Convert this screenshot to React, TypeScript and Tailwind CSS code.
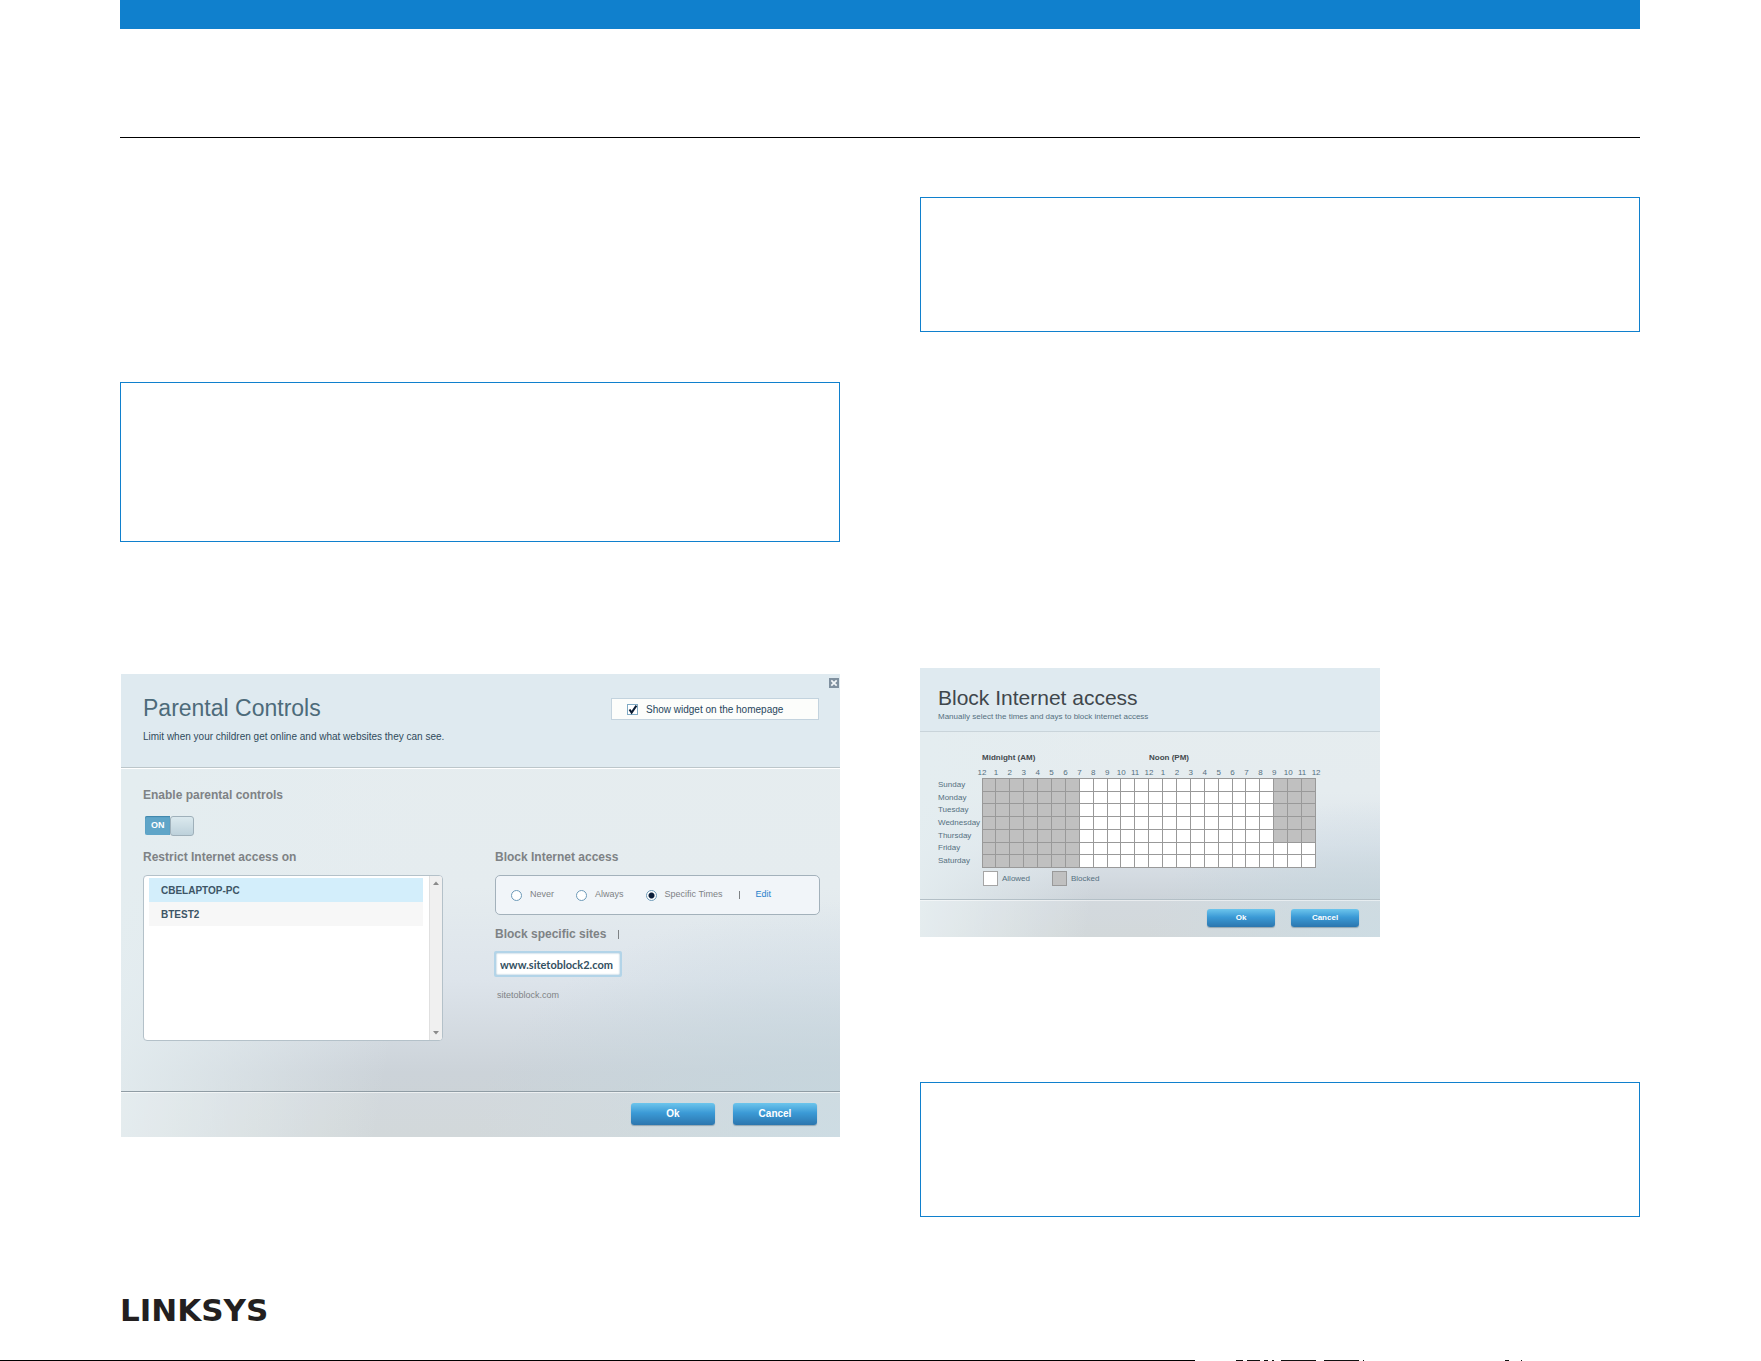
// src/App.tsx
import React, { useState } from 'react';
import clsx from 'clsx';

const devices = ['CBELAPTOP-PC', 'BTEST2'];
const accessModes = ['Never', 'Always', 'Specific Times'];

const days = ['Sunday', 'Monday', 'Tuesday', 'Wednesday', 'Thursday', 'Friday', 'Saturday'];
const hours = Array.from({ length: 24 }, (_, h) => h);
const hourLabels = [...hours, 24].map((h) => (h % 12 === 0 ? 12 : h % 12));

// Every night until 7 AM, and from 9 PM on school nights
const isBlocked = (day: number, hour: number) => hour < 7 || (day < 5 && hour >= 21);

const panelClass =
  'flex flex-col bg-[radial-gradient(ellipse_at_100%_100%,#c5d6de_0%,transparent_36%),linear-gradient(100deg,#e4edf0_4%,transparent_42%),linear-gradient(180deg,#e6edef_0%,#e5ecef_46%,#dde4eb_66%,#ccd3d9_86%,#cbd2d4_100%)]';

const NoteBox: React.FC<{ className?: string }> = ({ className }) => (
  <div className={clsx('border border-[#1080cd]', className)} />
);

const ActionButton: React.FC<{ label: string; className?: string }> = ({ label, className }) => (
  <button
    type="button"
    className={clsx(
      'rounded-[3px] bg-linear-to-b from-[#6cc5ec] via-[#3b9ad6] via-45% to-[#2c76ae] pb-px font-bold text-white shadow-[0_1px_1px_rgba(60,90,110,0.4)] hover:brightness-105',
      className
    )}
  >
    {label}
  </button>
);

const ParentalControls: React.FC = () => {
  const [enabled, setEnabled] = useState(true);
  const [selected, setSelected] = useState('CBELAPTOP-PC');
  const [mode, setMode] = useState('Specific Times');

  return (
    <section className={clsx('ml-px', panelClass)}>
      <header className="relative flex h-[94px] items-start justify-between border-b border-[#bcc6ca] bg-[#dfeaf0] pr-[21px] pl-[22px]">
        <div className="pt-5">
          <h2 className="text-[23px] leading-7 text-[#4d6b7a]">Parental Controls</h2>
          <p className="mt-[9px] text-[10px] leading-3 text-[#2f4a5c]">
            Limit when your children get online and what websites they can see.
          </p>
        </div>
        <label className="mt-6 flex h-[22px] w-52 items-center gap-2 border border-[#c3d3de] bg-[#fcfdfb] pl-[15px] text-[10px] text-[#27455c]">
          <span className="relative h-[11px] w-[11px]">
            <input
              type="checkbox"
              defaultChecked
              className="peer block h-[11px] w-[11px] appearance-none border border-[#7faac4] bg-white"
            />
            <svg
              viewBox="0 0 11 11"
              className="pointer-events-none absolute inset-0 hidden h-[11px] w-[11px] peer-checked:block"
            >
              <path d="M2.5 5.5 L4.6 8.6 L9.4 1.6" fill="none" stroke="#0b1d33" strokeWidth="2" />
            </svg>
          </span>
          Show widget on the homepage
        </label>
        <button
          type="button"
          aria-label="Close"
          className="absolute top-1 right-px h-[10px] w-[10px] bg-[#7f909f]"
        >
          <svg viewBox="0 0 10 10" className="h-[10px] w-[10px]">
            <path d="M2.3 2.3 L7.7 7.7 M7.7 2.3 L2.3 7.7" stroke="#f4f8fa" strokeWidth="1.7" />
          </svg>
        </button>
      </header>

      <div className="border-t border-white px-[22px] pt-[19px] pb-[50px] text-[#7e8285]">
        <h3 className="text-[12px] leading-[14px] font-bold">Enable parental controls</h3>
        <label className="mt-[14px] ml-0.5 flex h-5 w-[49px] cursor-pointer">
          <input
            type="checkbox"
            role="switch"
            aria-label="Enable parental controls"
            checked={enabled}
            onChange={() => setEnabled(!enabled)}
            className="sr-only"
          />
          {enabled && (
            <span className="flex h-[19px] flex-1 items-center rounded-l-[2px] bg-[#5fa5c8] pl-[6px] text-[9px] font-bold text-white shadow-[inset_0_1px_1px_#3f86aa]">
              ON
            </span>
          )}
          <span className="h-5 w-6 rounded-[3px] border border-[#9fb0ba] bg-linear-to-b from-[#dbe9ee] to-[#bdd1db]" />
          {!enabled && <span className="h-[19px] flex-1 rounded-r-[2px] bg-[#b5c0c6]" />}
        </label>

        <div className="mt-[14px] grid grid-cols-[300px_1fr] gap-[52px]">
          <div>
            <h3 className="text-[12px] leading-[14px] font-bold">Restrict Internet access on</h3>
            <div className="mt-[11px] flex h-[166px] overflow-hidden rounded-[4px] border border-[#b4c1c9] bg-white">
              <ul className="flex-1 px-[5px] pt-0.5">
                {devices.map((device) => (
                  <li key={device}>
                    <button
                      type="button"
                      onClick={() => setSelected(device)}
                      className={clsx(
                        'block h-6 w-[274px] pl-3 text-left text-[10px] font-bold text-[#3d5566]',
                        selected === device ? 'bg-[#d3eefb]' : 'bg-[#f7f7f7]'
                      )}
                    >
                      {device}
                    </button>
                  </li>
                ))}
              </ul>
              <div className="flex w-[13px] flex-col items-center justify-between border-l border-[#e0e0e0] bg-[#f0f0f0] py-[5px]">
                <svg viewBox="0 0 6 4" className="h-1 w-1.5">
                  <path d="M0 4 L3 0.5 L6 4 Z" fill="#8b8b8b" />
                </svg>
                <svg viewBox="0 0 6 4" className="h-1 w-1.5">
                  <path d="M0 0 L3 3.5 L6 0 Z" fill="#8b8b8b" />
                </svg>
              </div>
            </div>
          </div>

          <div>
            <h3 className="text-[12px] leading-[14px] font-bold">Block Internet access</h3>
            <div className="mt-[11px] mr-[-2px] flex h-10 items-center rounded-[5px] border border-[#a3b1bb] bg-[#f1f5f9] pl-[15px] text-[9px]">
              <div className="flex gap-[22px]">
                {accessModes.map((item) => (
                  <label key={item} className="flex items-center gap-2">
                    <input
                      type="radio"
                      name="access"
                      checked={mode === item}
                      onChange={() => setMode(item)}
                      className="h-[11px] w-[11px] appearance-none rounded-full border border-[#6d9ab8] bg-white checked:bg-[radial-gradient(circle,#0b1d3a_2.5px,white_3.5px)]"
                    />
                    {item}
                  </label>
                ))}
              </div>
              <span className="mx-4 h-2 w-px bg-[#7e8285]" />
              <a href="#schedule" className="text-[#1f82cc]">
                Edit
              </a>
            </div>

            <div className="mt-3 flex items-center gap-3 leading-[14px]">
              <label htmlFor="site" className="text-[12px] font-bold">
                Block specific sites
              </label>
              <span className="h-[9px] w-px bg-[#7e8285]" />
            </div>
            <input
              id="site"
              type="text"
              defaultValue="www.sitetoblock2.com"
              className="mt-[10px] -ml-px block h-[26px] w-32 rounded-[2px] border-2 border-[#b3d4e8] bg-white px-1 font-['Lato',sans-serif] text-[11px] font-bold text-[#34505f] shadow-[inset_0_0_2px_#7fa9c4] outline-none"
            />
            <p className="mt-3 pl-0.5 text-[9px] leading-3">sitetoblock.com</p>
          </div>
        </div>
      </div>

      <footer className="flex h-[46px] items-start justify-end gap-[18px] border-t border-[#8f9ca4] bg-white/15 pt-[11px] pr-[23px] text-[10px] shadow-[inset_0_1px_0_rgba(255,255,255,0.6)]">
        <ActionButton label="Ok" className="h-[22px] w-[84px]" />
        <ActionButton label="Cancel" className="h-[22px] w-[84px]" />
      </footer>
    </section>
  );
};

const BlockSchedule: React.FC = () => (
  <section id="schedule" className={clsx('w-[460px] text-[8px] text-[#55707f]', panelClass)}>
    <header className="h-16 border-b border-[#c9d4da] bg-[#dfeaf0] pt-4 pl-[18px]">
      <h2 className="text-[21px] leading-7 text-[#3f474c]">Block Internet access</h2>
      <p className="leading-[10px]">Manually select the times and days to block internet access</p>
    </header>

    <div className="pt-[21px] pl-[18px]">
      <div className="flex pl-11 leading-[10px] font-bold text-[#43494d]">
        <span className="w-[167px]">Midnight (AM)</span>
        <span>Noon (PM)</span>
      </div>
      <div className="mt-[5px] ml-[37px] flex w-[348px] leading-[10px]">
        {hourLabels.map((label, i) => (
          <span key={i} className="flex-1 text-center">
            {label}
          </span>
        ))}
      </div>
      <table className="h-[90px] w-[378px] table-fixed border-collapse leading-[10px]">
        <tbody>
          {days.map((day, d) => (
            <tr key={day}>
              <th scope="row" className="w-11 p-0 text-left font-normal">
                {day}
              </th>
              {hours.map((hour) => (
                <td
                  key={hour}
                  className={clsx('border border-[#999999] p-0', isBlocked(d, hour) ? 'bg-[#c0c0c0]' : 'bg-white')}
                />
              ))}
            </tr>
          ))}
        </tbody>
      </table>
      <div className="mt-[3px] flex items-center pl-[45px]">
        <span className="mr-1 h-[15px] w-[15px] border border-[#a5a5a5] bg-white" />
        <span className="w-[50px]">Allowed</span>
        <span className="mr-1 h-[15px] w-[15px] border border-[#999999] bg-[#c0c0c0]" />
        <span>Blocked</span>
      </div>
    </div>

    <footer className="mt-[13px] flex h-[38px] items-start justify-end gap-4 border-t border-[#b3bfc6] bg-white/15 pt-[9px] pr-[21px] text-[8px] shadow-[inset_0_1px_0_rgba(255,255,255,0.5)]">
      <ActionButton label="Ok" className="h-[18px] w-[68px]" />
      <ActionButton label="Cancel" className="h-[18px] w-[68px]" />
    </footer>
  </section>
);

const App: React.FC = () => {
  return (
    <div className="flex min-h-screen flex-col bg-white font-['Liberation_Sans',Arial,sans-serif]">
      <div className="mr-[121px] ml-[120px] flex-1">
        <div className="h-[29px] bg-[#1080cd]" />
        <div className="mt-[108px] h-px bg-black" />

        <main className="grid grid-cols-2 gap-20">
          <div className="pt-[244px]">
            <NoteBox className="h-40" />
            <div className="mt-[132px]">
              <ParentalControls />
            </div>
          </div>
          <div className="pt-[59px]">
            <NoteBox className="h-[135px]" />
            <div className="mt-[336px]">
              <BlockSchedule />
            </div>
            <NoteBox className="mt-[145px] h-[135px]" />
          </div>
        </main>

        <div className="mt-[76px] font-['DejaVu_Sans',sans-serif] text-[31px] leading-[34px] font-bold text-[#231f20]">
          LINKSYS
        </div>
      </div>

      {/* page edge */}
      <div className="flex h-px">
        <div className="w-[1195px] bg-black" />
        <svg viewBox="0 0 330 1" className="h-px w-[330px]">
          <path
            d="M41 0.5 H327"
            stroke="#111111"
            strokeDasharray="7 4 13 4 4 4 2 7 35 8 35 4 1 141 4 12 2 10"
          />
        </svg>
      </div>
    </div>
  );
};

export default App;
